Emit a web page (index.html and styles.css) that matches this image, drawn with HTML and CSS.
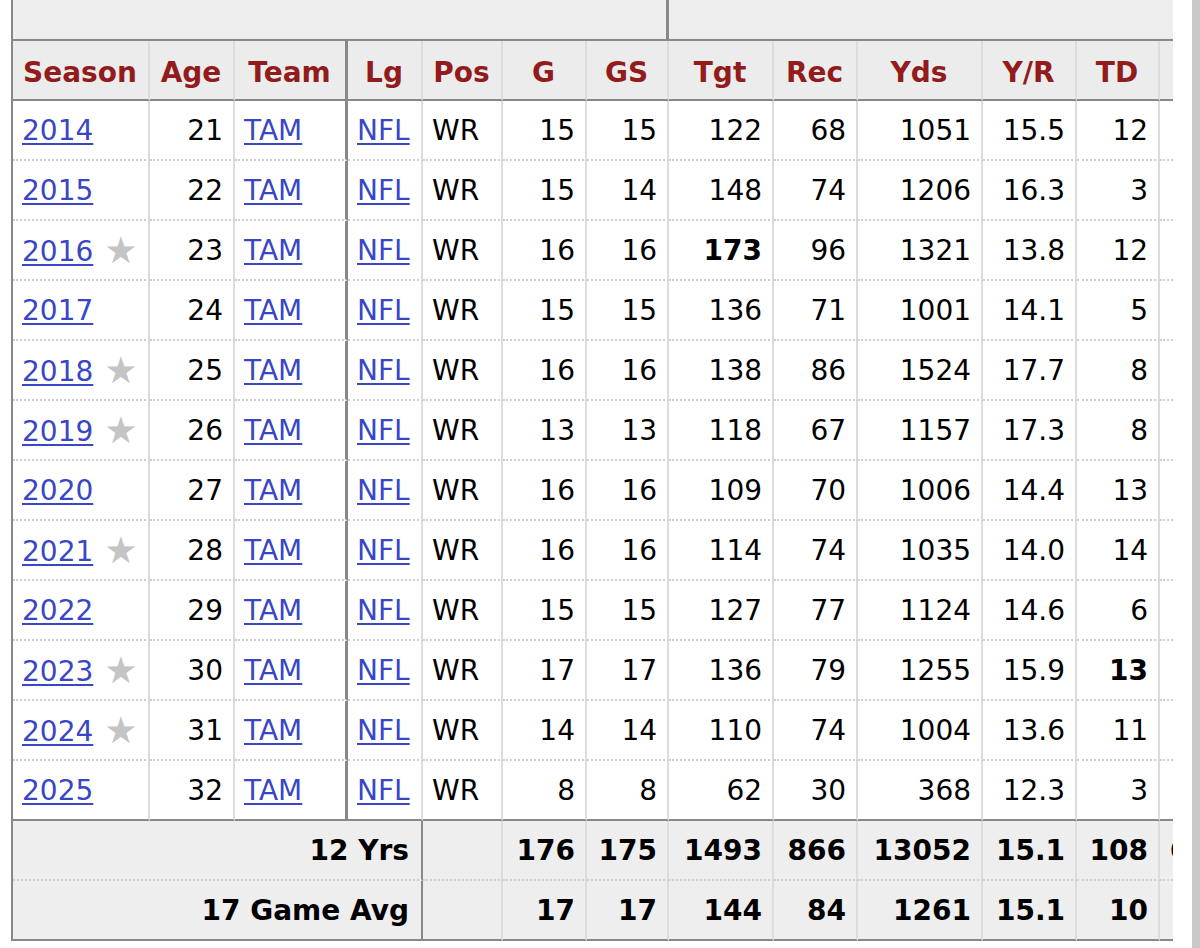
FILE: index.html
```html
<!DOCTYPE html>
<html>
<head>
<meta charset="utf-8">
<link rel="stylesheet" href="styles.css">
</head>
<body>
<div class="wrap">
<table class="stats">
<colgroup>
<col class="c-season"><col class="c-age"><col class="c-team"><col class="c-lg"><col class="c-pos"><col class="c-g"><col class="c-gs"><col class="c-tgt"><col class="c-rec"><col class="c-yds"><col class="c-yr"><col class="c-td"><col class="c-fd">
</colgroup>
<thead>
<tr class="over">
<th colspan="7" class="over-a"></th>
<th colspan="6" class="over-b"></th>
</tr>
<tr class="head">
<th class="l">Season</th><th>Age</th><th class="l dark">Team</th><th>Lg</th><th>Pos</th><th>G</th><th>GS</th><th>Tgt</th><th>Rec</th><th>Yds</th><th>Y/R</th><th>TD</th><th>1D</th>
</tr>
</thead>
<tbody>
<tr><td class="l"><a href="#">2014</a></td><td>21</td><td class="l dark"><a href="#">TAM</a></td><td class="l"><a href="#">NFL</a></td><td class="l">WR</td><td>15</td><td>15</td><td>122</td><td>68</td><td>1051</td><td>15.5</td><td>12</td><td>51</td></tr>
<tr><td class="l"><a href="#">2015</a></td><td>22</td><td class="l dark"><a href="#">TAM</a></td><td class="l"><a href="#">NFL</a></td><td class="l">WR</td><td>15</td><td>14</td><td>148</td><td>74</td><td>1206</td><td>16.3</td><td>3</td><td>58</td></tr>
<tr><td class="l"><a href="#">2016</a><span class="star">★</span></td><td>23</td><td class="l dark"><a href="#">TAM</a></td><td class="l"><a href="#">NFL</a></td><td class="l">WR</td><td>16</td><td>16</td><td><b>173</b></td><td>96</td><td>1321</td><td>13.8</td><td>12</td><td>64</td></tr>
<tr><td class="l"><a href="#">2017</a></td><td>24</td><td class="l dark"><a href="#">TAM</a></td><td class="l"><a href="#">NFL</a></td><td class="l">WR</td><td>15</td><td>15</td><td>136</td><td>71</td><td>1001</td><td>14.1</td><td>5</td><td>57</td></tr>
<tr><td class="l"><a href="#">2018</a><span class="star">★</span></td><td>25</td><td class="l dark"><a href="#">TAM</a></td><td class="l"><a href="#">NFL</a></td><td class="l">WR</td><td>16</td><td>16</td><td>138</td><td>86</td><td>1524</td><td>17.7</td><td>8</td><td>68</td></tr>
<tr><td class="l"><a href="#">2019</a><span class="star">★</span></td><td>26</td><td class="l dark"><a href="#">TAM</a></td><td class="l"><a href="#">NFL</a></td><td class="l">WR</td><td>13</td><td>13</td><td>118</td><td>67</td><td>1157</td><td>17.3</td><td>8</td><td>52</td></tr>
<tr><td class="l"><a href="#">2020</a></td><td>27</td><td class="l dark"><a href="#">TAM</a></td><td class="l"><a href="#">NFL</a></td><td class="l">WR</td><td>16</td><td>16</td><td>109</td><td>70</td><td>1006</td><td>14.4</td><td>13</td><td>52</td></tr>
<tr><td class="l"><a href="#">2021</a><span class="star">★</span></td><td>28</td><td class="l dark"><a href="#">TAM</a></td><td class="l"><a href="#">NFL</a></td><td class="l">WR</td><td>16</td><td>16</td><td>114</td><td>74</td><td>1035</td><td>14.0</td><td>14</td><td>53</td></tr>
<tr><td class="l"><a href="#">2022</a></td><td>29</td><td class="l dark"><a href="#">TAM</a></td><td class="l"><a href="#">NFL</a></td><td class="l">WR</td><td>15</td><td>15</td><td>127</td><td>77</td><td>1124</td><td>14.6</td><td>6</td><td>56</td></tr>
<tr><td class="l"><a href="#">2023</a><span class="star">★</span></td><td>30</td><td class="l dark"><a href="#">TAM</a></td><td class="l"><a href="#">NFL</a></td><td class="l">WR</td><td>17</td><td>17</td><td>136</td><td>79</td><td>1255</td><td>15.9</td><td><b>13</b></td><td>62</td></tr>
<tr><td class="l"><a href="#">2024</a><span class="star">★</span></td><td>31</td><td class="l dark"><a href="#">TAM</a></td><td class="l"><a href="#">NFL</a></td><td class="l">WR</td><td>14</td><td>14</td><td>110</td><td>74</td><td>1004</td><td>13.6</td><td>11</td><td>53</td></tr>
<tr class="last"><td class="l"><a href="#">2025</a></td><td>32</td><td class="l dark"><a href="#">TAM</a></td><td class="l"><a href="#">NFL</a></td><td class="l">WR</td><td>8</td><td>8</td><td>62</td><td>30</td><td>368</td><td>12.3</td><td>3</td><td>18</td></tr>
</tbody>
<tfoot>
<tr><td colspan="4" class="label">12 Yrs</td><td></td><td>176</td><td>175</td><td>1493</td><td>866</td><td>13052</td><td>15.1</td><td>108</td><td>644</td></tr>
<tr class="end"><td colspan="4" class="label">17 Game Avg</td><td></td><td>17</td><td>17</td><td>144</td><td>84</td><td>1261</td><td>15.1</td><td>10</td><td>62</td></tr>
</tfoot>
</table>
</div>
<div class="scrollbar"></div>
</body>
</html>
```

FILE: styles.css
```css
html, body {
  margin: 0;
  padding: 0;
  background: #ffffff;
}
body {
  display: flex;
  width: 1200px;
  height: 948px;
  overflow: hidden;
  font-family: "DejaVu Sans", Verdana, sans-serif;
  font-size: 28px;
  color: #000;
}
.wrap {
  margin-left: 11px;
  width: 1162px;
  overflow: hidden;
  flex: none;
}
.scrollbar {
  margin-left: auto;
  width: 8px;
  height: 948px;
  background: #c9c9c9;
  flex: none;
}
.stats {
  table-layout: fixed;
  border-collapse: separate;
  border-spacing: 0;
  width: 1229px;
  border-left: 2px solid #888;
}
.c-season { width: 137px; }
.c-age { width: 85px; }
.c-team { width: 113px; }
.c-lg { width: 75px; }
.c-pos { width: 80px; }
.c-g { width: 84px; }
.c-gs { width: 82px; }
.c-tgt { width: 105px; }
.c-rec { width: 84px; }
.c-yds { width: 125px; }
.c-yr { width: 94px; }
.c-td { width: 83px; }
.c-fd { width: 80px; }

.stats th, .stats td {
  box-sizing: border-box;
  padding: 0 10px 0 9px;
  white-space: nowrap;
  overflow: hidden;
  border-right: 2px solid #dcdcdc;
}
.over th {
  height: 41px;
  background: #eeeeee;
  border-bottom: 2px solid #888;
  border-right: none;
}
.over .over-a {
  border-right: 3px solid #888;
}
.head th {
  height: 60px;
  padding-top: 5px;
  background: #ececec;
  color: #921b1b;
  font-weight: bold;
  text-align: center;
  border-bottom: 2px solid #888;
}
.stats td {
  height: 60px;
  text-align: right;
  vertical-align: middle;
  border-bottom: 2px dotted #cfcfcf;
  background: #fff;
}
.stats .l {
  text-align: left;
}
.head th.l {
  text-align: center;
}
.stats .dark {
  border-right: 3px solid #888;
}
tbody tr.last td {
  border-bottom: 2px solid #888;
}
.stats tfoot td {
  background: #eeeeee;
  font-weight: bold;
}
.stats tfoot tr.end td {
  border-bottom: 2px solid #888;
}
.stats tfoot td.label {
  text-align: right;
  border-right: 2px solid #888;
  padding-right: 12px;
}
a {
  color: #3946c6;
  text-decoration: underline;
  text-decoration-thickness: 2px;
  text-underline-offset: 3px;
}
.star {
  color: #c4c4c4;
  margin-left: 11px;
  font-size: 37px;
  line-height: 1;
  vertical-align: -2px;
}
```
